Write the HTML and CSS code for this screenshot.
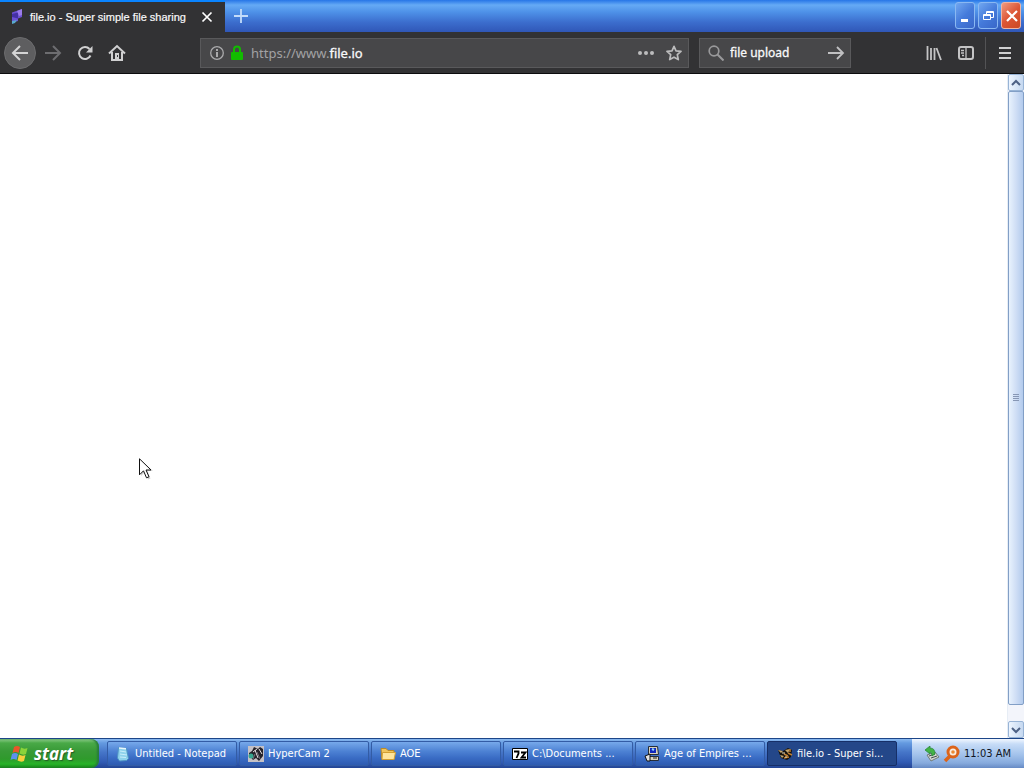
FILE: index.html
```html
<!DOCTYPE html>
<html lang="en">
<head>
<meta charset="utf-8">
<title>file.io - Super simple file sharing</title>
<link rel="stylesheet" href="styles.css">
</head>
<body>
<header class="titlebar">
  <div class="tab">
    <svg class="icon" width="16" height="16" viewBox="0 0 16 16"><path fill="#6c50d4" d="M4 3.500L14 0v8l-4 1.500V12l-6 2z"/><path fill="#4430a4" d="M4 5l6-1.500v6L4 8z"/><path fill="#9b7be9" d="M9 2l5-2v6l-3 1z"/><path fill="#59a9ce" d="M4 12l5-1-2 3-3 1z"/></svg>
    <span class="tab-title">file.io - Super simple file sharing</span>
    <button class="tab-close" aria-label="Close tab"><svg width="12" height="12" viewBox="0 0 12 12"><path d="M1.500 1.500l9 9m0-9l-9 9" stroke="#fff" stroke-width="1.700"/></svg></button>
  </div>
  <button class="new-tab" aria-label="New tab"><svg width="16" height="16" viewBox="0 0 16 16"><path d="M8 1v14M1 8h14" stroke="#c3dcfa" stroke-width="1.800"/></svg></button>
  <div class="window-controls">
    <button class="win" aria-label="Minimize"><svg width="20" height="26" viewBox="0 0 20 26"><path fill="#fff" d="M5 16h7v3H5z"/></svg></button>
    <button class="win" aria-label="Restore"><svg width="20" height="26" viewBox="0 0 20 26"><path fill="none" stroke="#fff" d="M7.500 11V8.500h7v6H12M7 9.500h8M4.500 11.500h7v5h-7zM4 12.500h8"/></svg></button>
    <button class="win win-close" aria-label="Close"><svg width="20" height="26" viewBox="0 0 20 26"><path d="M5 8l10 10m0-10l-10 10" stroke="#fff" stroke-width="2.200"/></svg></button>
  </div>
</header>
<nav class="toolbar">
  <div class="nav-buttons">
    <button class="tool back" aria-label="Back"><svg width="18" height="16" viewBox="0 0 18 16"><path d="M17 8H2m7-7L2 8l7 7" fill="none" stroke="#d4d4d5" stroke-width="2"/></svg></button>
    <button class="tool" aria-label="Forward"><svg width="18" height="16" viewBox="0 0 18 16"><path d="M1 8h15M9 1l7 7-7 7" fill="none" stroke="#6d6d70" stroke-width="2"/></svg></button>
    <button class="tool" aria-label="Reload"><svg width="16" height="16" viewBox="0 0 16 16"><path d="M13.500 10.500A6 6 0 1 1 12.500 4" fill="none" stroke="#d0d0d1" stroke-width="2"/><path fill="#d0d0d1" d="M15.500 1v6.500H9z"/></svg></button>
    <button class="tool" aria-label="Home"><svg width="18" height="18" viewBox="0 0 18 18"><path d="M1 9.500L9 2l8 7.500M4 8v8h10V8" fill="none" stroke="#d0d0d1" stroke-width="2"/><path fill="#d0d0d1" d="M7 9h4v7H7z"/><path fill="#38383b" d="M9 11h1v2H9z"/></svg></button>
  </div>
  <form class="address field">
    <svg class="icon" width="16" height="16" viewBox="0 0 16 16"><circle cx="8" cy="8" r="6.300" fill="none" stroke="#aaaaac" stroke-width="1.300"/><path fill="#aaaaac" d="M7 4h2v2H7zM7 7h2v5H7z"/></svg>
    <svg class="icon" width="12" height="16" viewBox="0 0 12 16"><path d="M3 8V4.500a3 3 0 0 1 6 0V8" fill="none" stroke="#12bc00" stroke-width="2"/><rect y="7" width="12" height="8" rx="1" fill="#12bc00"/></svg>
    <a class="url" href="#"><span class="muted">https://www.</span>file.io</a>
    <button type="button" class="plain" aria-label="Page actions"><svg width="16" height="16" viewBox="0 0 16 16"><g fill="#bcbcbd"><circle cx="2" cy="8" r="2"/><circle cx="8" cy="8" r="2"/><circle cx="14" cy="8" r="2"/></g></svg></button>
    <button type="button" class="plain" aria-label="Bookmark this page"><svg width="16" height="16" viewBox="0 0 16 16"><path d="M8 1.300l2 4.500 5 .6-3.700 3.300 1 4.900L8 12.200l-4.300 2.400 1-4.900L1 6.400l5-.6z" fill="none" stroke="#bcbcbd" stroke-width="1.700" stroke-linejoin="round"/></svg></button>
  </form>
  <form class="search field">
    <svg class="icon" width="16" height="16" viewBox="0 0 16 16"><circle cx="6" cy="6" r="4.800" fill="none" stroke="#99999b" stroke-width="1.700"/><path d="M9.500 9.500l6 6" stroke="#99999b" stroke-width="2"/></svg>
    <input class="search-input" aria-label="Search" value="file upload">
    <button type="button" class="plain" aria-label="Go"><svg width="18" height="16" viewBox="0 0 18 16"><path d="M1 8h15M10 2l6 6-6 6" fill="none" stroke="#c0c0c2" stroke-width="1.800"/></svg></button>
  </form>
  <div class="side-buttons">
    <button class="tool" aria-label="Library"><svg width="16" height="16" viewBox="0 0 16 16"><path d="M1.500 1v14M5 3v12M8.500 3v12M10.500 3l4.500 12" fill="none" stroke="#c4c4c5" stroke-width="1.800"/></svg></button>
    <button class="tool" aria-label="Sidebars"><svg width="16" height="16" viewBox="0 0 16 16"><rect x="1" y="2" width="14" height="12" rx="2" fill="none" stroke="#c4c4c5" stroke-width="2"/><path d="M8 2v12M3 5.500h3M3 8h3M4 10.500h2" stroke="#c4c4c5" stroke-width="1.300"/></svg></button>
    <span class="divider"></span>
    <button class="tool" aria-label="Menu"><svg width="12" height="14" viewBox="0 0 12 14"><path d="M0 2h12M0 7h12M0 12h12" stroke="#d0d0d1" stroke-width="2"/></svg></button>
  </div>
</nav>
<main class="viewport">
  <div class="page"></div>
  <div class="scrollbar">
    <button class="scroll-arrow" aria-label="Scroll up"><svg width="10" height="8" viewBox="0 0 10 8"><path d="M1 6l4-4 4 4" fill="none" stroke="#4d6185" stroke-width="2"/></svg></button>
    <div class="thumb"><svg width="6" height="8" viewBox="0 0 6 8"><path d="M0 .5h6M0 2.500h6M0 4.500h6M0 6.500h6" stroke="#8797b5"/></svg></div>
    <div class="track"></div>
    <button class="scroll-arrow" aria-label="Scroll down"><svg width="10" height="8" viewBox="0 0 10 8"><path d="M1 2l4 4 4-4" fill="none" stroke="#4d6185" stroke-width="2"/></svg></button>
  </div>
</main>
<footer class="taskbar">
  <button class="start">
    <svg width="20" height="18" viewBox="0 0 20 18"><path fill="#e9562a" d="M4 2q3-2 6 0L8.500 8q-3-2-6 0z"/><path fill="#8bd33a" d="M11 2.500q3 2 6.500.5L16 9q-3 1.500-6.500-.5z"/><path fill="#5c91ee" d="M2 9q3-2 6 0l-1.500 6q-3-2-6 0z"/><path fill="#f8cf3c" d="M9 9.500q3 2 6.500.5L14 16q-3 1.500-6.500-.5z"/></svg>
    <span>start</span>
  </button>
  <div class="tasks">
    <button class="task"><svg class="icon" width="16" height="16" viewBox="0 0 16 16"><path fill="#8ed2ec" stroke="#4f93c4" d="M3.500 1.500l8 1 2 10-2 2-7 .5-2-3z"/><path d="M5 5l6 1M5 8l7 1M5 11l6 .5" stroke="#c9eefa"/><path d="M4 2l7 .8" stroke="#e9f7fc" stroke-width="1.500"/></svg><span>Untitled - Notepad</span></button>
    <button class="task"><svg class="icon" width="16" height="16" viewBox="0 0 16 16"><path fill="#c5c1c6" d="M0 0h16v16H0z"/><path fill="#25232a" d="M1 7l3-2 2-4 4 2 2-2 3 2v7l-4 5-3-3-3 2-4-5z"/><circle cx="3" cy="10" r="2.500" fill="#37a58e"/><path d="M7 4l3 8M11 3l3 5M5 6l4-3" stroke="#e5dfe2"/><path d="M5 13l2-5M12 13l-3-7" stroke="#77717c"/></svg><span>HyperCam 2</span></button>
    <button class="task"><svg class="icon" width="16" height="16" viewBox="0 0 16 16"><path fill="#f1c45a" stroke="#b98a29" d="M1 2.500h5l2 2h6v9H2z"/><path fill="#ffe49a" stroke="#d39f32" d="M2.500 6.500h13l-1.500 7H2z"/></svg><span>AOE</span></button>
    <button class="task"><svg class="icon" width="16" height="16" viewBox="0 0 16 16"><path fill="#fff" stroke="#000" d="M.5 2.500h15v11H.5z"/><path d="M2 5.500h4.500v2L4.500 12M9 6.500h4.500L9.500 11.500H14" fill="none" stroke="#000" stroke-width="1.800"/></svg><span>C:\Documents ...</span></button>
    <button class="task"><svg class="icon" width="16" height="16" viewBox="0 0 16 16"><path fill="#d8d3be" stroke="#262d38" d="M4.500.5h9l1 8h-10zM4.500 10.500h10v4h-10z"/><path fill="#1027bc" d="M6 2h6v5H6z"/><path d="M8 3l2 1" stroke="#91d9ff" stroke-width="2"/><path d="M1 10l5-2v7H3z" fill="#e3e3e3" stroke="#111"/><path d="M9 12h4" stroke="#222"/></svg><span>Age of Empires ...</span></button>
    <button class="task active"><svg class="icon" width="16" height="16" viewBox="0 0 16 16"><path fill="#15110b" d="M1 4l5 1 5-3 4 2-1 7-4 3-6-2z"/><path fill="#c5a66b" d="M1 4l5 1-2 2zM8 4l5-1-2 4zM3 9l4 1-2 2z"/><path d="M7 8l4 2M11 7l4 2M7 12l5-1M13 3v3" stroke="#bd7e32" stroke-width="1.500"/><path d="M5 7h3M8 11h2" stroke="#eee2c1"/></svg><span>file.io - Super si...</span></button>
  </div>
  <div class="tray">
    <svg class="icon" width="16" height="16" viewBox="0 0 16 16"><path fill="#d1d5d1" stroke="#727d78" d="M3 9l8-3 4 5-8 4z"/><path d="M5 10l6-2M7 12l6-2" stroke="#45504d"/><path fill="#42b344" stroke="#238333" stroke-width=".7" d="M1 4l5-4v2q5 0 5 6l-3 2q0-4-2-4v2z"/></svg>
    <svg class="icon" width="18" height="18" viewBox="0 0 18 18"><path d="M7 11l-5 5" stroke="#dc641a" stroke-width="3.500"/><circle cx="10" cy="7" r="5" fill="#f9ede0" stroke="#dc641a" stroke-width="3"/><circle cx="10" cy="7" r="1.800" fill="#eb8b35"/></svg>
    <time>11:03 AM</time>
  </div>
</footer>
<svg class="cursor" width="14" height="23" viewBox="0 0 14 23"><path d="M1 1v16l4-4 3 7.500 2.500-1L7.500 12H13z" transform="translate(1 1)" fill="#d4d4d4"/><path d="M.5 .8v16l4-4 3 7 2.500-1-3-6.800h5z" fill="#fff" stroke="#111"/></svg>
</body>
</html>
```
FILE: styles.css
```css
* { box-sizing: border-box; }
body {
  margin: 0;
  height: 100vh;
  display: flex;
  flex-direction: column;
  overflow: hidden;
  background: #fff;
  font-family: "DejaVu Sans Condensed", "DejaVu Sans", sans-serif;
  font-size: 11px;
}
button { margin: 0; padding: 0; border: 0; background: none; font: inherit; color: inherit; }
svg { display: block; flex: none; }
.titlebar {
  height: 32px;
  display: flex;
  background: linear-gradient(#2675e7, #65aaf5 5px, #4e91e8 12px, #3c6ece 22px, #3057b7);
}
.tab {
  width: 225px;
  display: flex;
  align-items: center;
  padding: 0 12px 0 8px;
  background: #323234;
  border-top: 2px solid #0a84ff;
  color: #f9f9fa;
}
.tab-title { flex: 1; margin-left: 6px; font-family: "Liberation Sans", sans-serif; font-size: 11px; white-space: nowrap; -webkit-text-stroke: .2px; }
.new-tab { width: 32px; display: grid; place-items: center; }
.window-controls { margin-left: auto; display: flex; gap: 3px; padding: 2px 3px 0 0; align-items: flex-start; }
.win {
  width: 20px;
  height: 27px;
  display: grid;
  place-items: center;
  overflow: hidden;
  border: 1px solid #8ab8f2;
  border-radius: 3px;
  background: linear-gradient(135deg, #71a7f0, #457bdb 50%, #3967c9);
}
.win-close { background: linear-gradient(135deg, #f09a80, #dd5636 50%, #cb4924); border-color: #f0b4a2; }
.toolbar {
  height: 42px;
  display: flex;
  align-items: center;
  background: #323234;
  border-bottom: 1px solid #0c0c0d;
  padding: 0 3px 0 4px;
}
.nav-buttons, .side-buttons { display: flex; align-items: center; }
.nav-buttons { margin-right: 67px; }
.side-buttons { margin-left: 67px; }
.tool { width: 32px; height: 32px; display: grid; place-items: center; }
.back { border-radius: 50%; background: #5e5e60; border: 1px solid #6c6c6e; margin-right: 1px; }
.field {
  height: 30px;
  display: flex;
  align-items: center;
  background: #474749;
  border: 1px solid #59595b;
  font-family: "Noto Sans", sans-serif;
  font-size: 12px;
  color: #f9f9fa;
}
.address { flex: 1; padding: 0 6px 0 8px; gap: 6px; font-size: 13px; }
.url { flex: 1; color: #f9f9fa; text-decoration: none; margin-left: 2px; -webkit-text-stroke: .3px; }
.muted { color: #a2a2a4; -webkit-text-stroke: 0; }
.plain { display: grid; place-items: center; }
.plain + .plain { margin-left: 6px; }
.search { width: 152px; margin-left: 10px; padding: 0 5px 0 8px; gap: 6px; }
.search-input { flex: 1; min-width: 0; padding: 0; border: 0; outline: 0; background: none; color: #f9f9fa; font: inherit; -webkit-text-stroke: .3px; }
.divider { width: 1px; height: 32px; margin: 0 3px; background: #535355; }
.viewport { flex: 1; min-height: 0; display: flex; }
.page { flex: 1; background: #fff; }
.scrollbar { width: 17px; display: flex; flex-direction: column; background: #f3f5fb; border-left: 1px solid #e7edf5; }
.scroll-arrow {
  height: 17px;
  display: grid;
  place-items: center;
  border: 1px solid #98b4d6;
  border-radius: 2px;
  background: linear-gradient(90deg, #edf5ff, #c5d8f0);
}
.thumb {
  flex: 1;
  display: grid;
  place-items: center;
  border: 1px solid #829fc6;
  border-radius: 2px;
  background: linear-gradient(90deg, #e8f2fd, #cfdef5 50%, #b3cbed);
}
.track { height: 16px; }
.taskbar {
  height: 30px;
  display: flex;
  border-top: 1px solid #1c4588;
  background: linear-gradient(#8bbaf1, #649ae0 4px, #4676c9 13px, #315bb4 23px, #234594);
  color: #fff;
}
.start {
  width: 99px;
  display: flex;
  align-items: center;
  gap: 4px;
  padding-left: 10px;
  border-radius: 0 8px 8px 0;
  background: linear-gradient(#8fcd8b, #49a947 4px, #389a37 12px, #2f9a2c 20px, #27b328 25px, #178219);
  box-shadow: inset -2px 0 2px #287c3c;
  font: italic bold 17px "Open Sans", sans-serif;
  text-shadow: 1px 1px 1px #235e26;
}
.tasks { flex: 1; min-width: 0; display: grid; grid-template-columns: repeat(6, minmax(0, 1fr)); gap: 2px; padding: 2px 15px 2px 8px; }
.task {
  display: flex;
  align-items: center;
  gap: 4px;
  padding-left: 8px;
  border: 1px solid #335ca5;
  border-radius: 2px;
  background: linear-gradient(#77a9eb, #4d82d4 40%, #396bc4 70%, #2e5bb1);
  white-space: nowrap;
  overflow: hidden;
}
.task:first-child { padding-left: 7px; }
.active { padding-left: 9px; background: #244789; border-color: #162f68; }
.tray {
  width: 112px;
  display: flex;
  align-items: center;
  gap: 3px;
  padding-left: 12px;
  background: linear-gradient(#f1f7ff, #c7dcf7 5px, #a5c4ec 15px, #86aadd 24px, #668ac4);
  color: #101521;
  white-space: nowrap;
}
.cursor { position: absolute; left: 139px; top: 458px; }
```
